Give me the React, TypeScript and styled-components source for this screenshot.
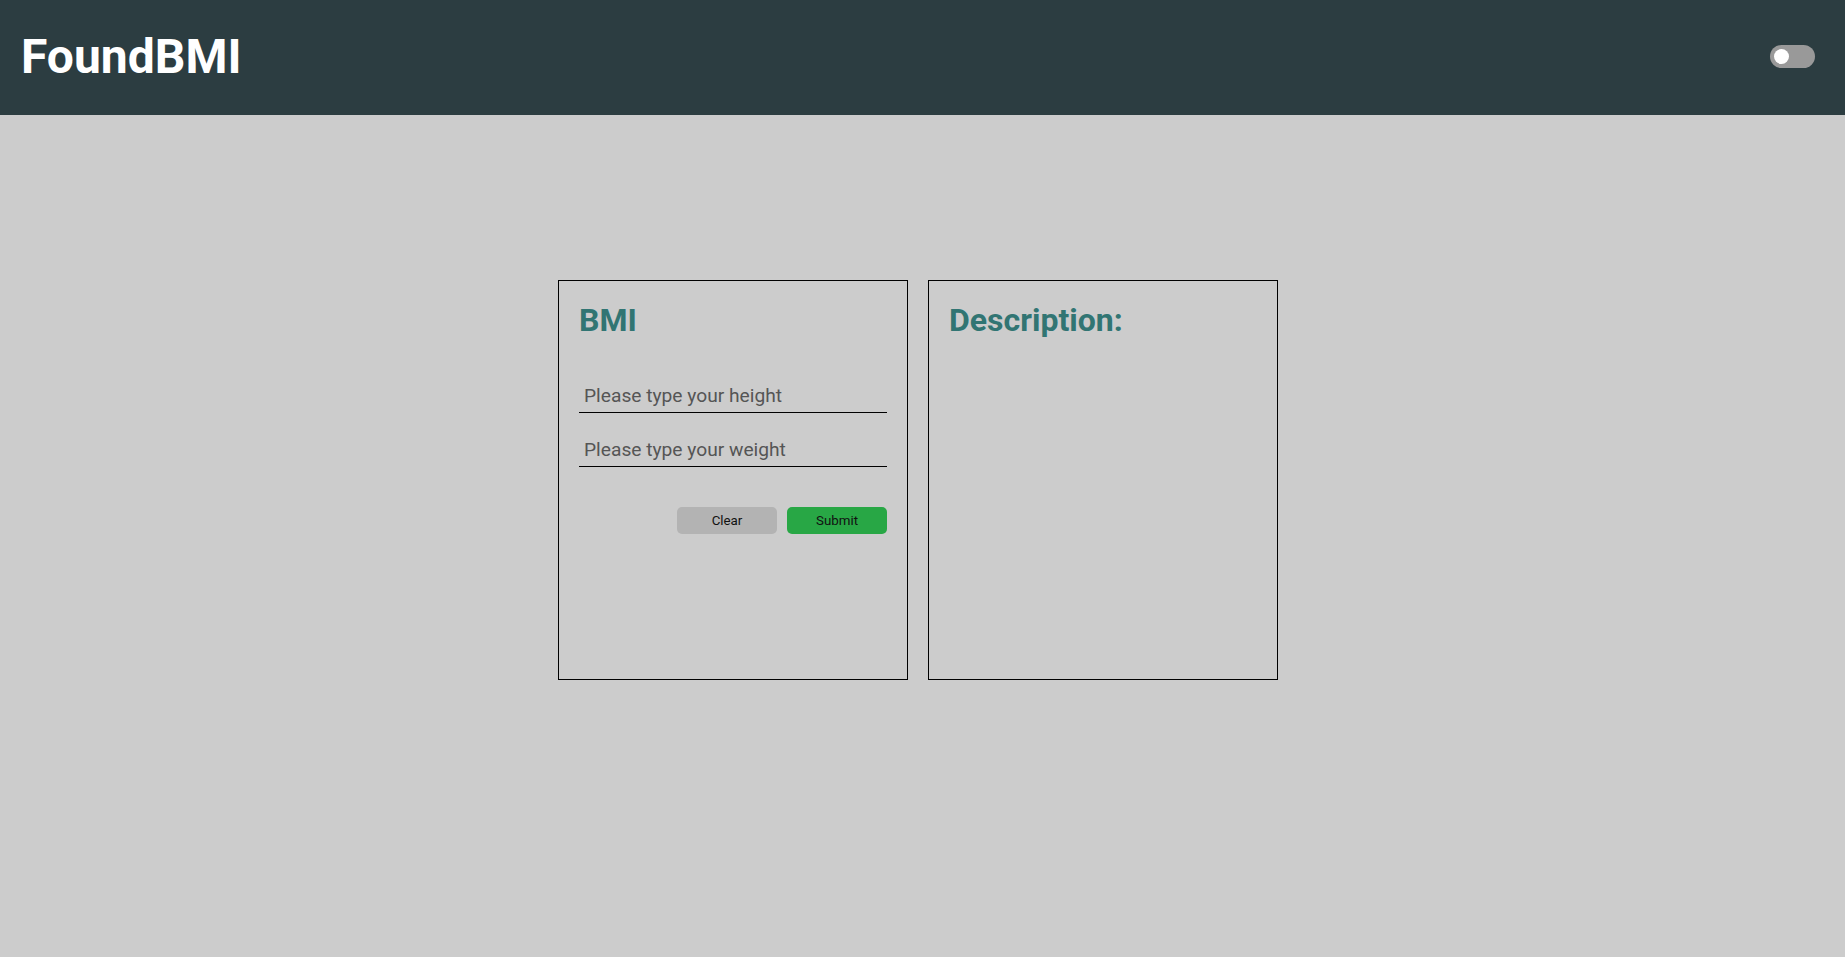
import React from "react";
import styled, { createGlobalStyle } from "styled-components";

const GlobalStyle = createGlobalStyle`
  html, body {
    margin: 0;
    padding: 0;
    background: #cccccc;
    font-family: Roboto, "Liberation Sans", Arial, sans-serif;
  }
  * { box-sizing: border-box; }
`;

const Page = styled.div`
  min-height: 957px;
  background: #cccccc;
  display: flex;
  flex-direction: column;
`;

const Header = styled.header`
  height: 115px;
  background: #2c3d41;
  display: flex;
  align-items: center;
  justify-content: space-between;
  padding: 0 30px 0 21px;
`;

const Brand = styled.h1`
  margin: 0 0 3px 0;
  font-family: Roboto, "Liberation Sans", sans-serif;
  font-weight: 700;
  font-size: 48px;
  color: #ffffff;
`;

const Toggle = styled.label`
  width: 45px;
  height: 23px;
  border-radius: 12px;
  background: #999999;
  position: relative;
  cursor: pointer;
  display: block;
  margin-bottom: 2px;
`;

const Knob = styled.span`
  position: absolute;
  top: 4px;
  left: 4px;
  width: 15px;
  height: 15px;
  border-radius: 50%;
  background: #ffffff;
`;

const Main = styled.main`
  display: flex;
  justify-content: center;
  gap: 20px;
  padding: 165px 9px 0 0;
`;

const Card = styled.section`
  width: 350px;
  height: 400px;
  border: 1px solid #000000;
  padding: 20px;
  display: flex;
  flex-direction: column;
`;

const CardTitle = styled.h2<{ $gap?: number }>`
  margin: 0 0 ${(p) => p.$gap ?? 0}px 0;
  font-family: Roboto, "Liberation Sans", sans-serif;
  font-weight: 700;
  font-size: 32px;
  line-height: normal;
  color: #317573;
`;

const Form = styled.form`
  display: flex;
  flex-direction: column;
  gap: 22px;
`;

const Field = styled.input`
  width: 100%;
  height: 32px;
  padding: 3px 5px 5px;
  border: none;
  border-bottom: 1px solid #000000;
  background: transparent;
  font-family: Roboto, "Liberation Sans", sans-serif;
  font-size: 19.2px;
  color: #222;
  outline: none;
  &::placeholder {
    color: #555555;
  }
`;

const Actions = styled.div`
  display: flex;
  justify-content: flex-end;
  gap: 10px;
  margin-top: 18px;
`;

const Button = styled.button<{ $variant: "clear" | "submit" }>`
  width: 100px;
  height: 27px;
  border: none;
  border-radius: 5px;
  font-family: Roboto, "Liberation Sans", sans-serif;
  font-size: 13.33px;
  color: #111111;
  background: ${(p) => (p.$variant === "submit" ? "#28a745" : "#b3b3b3")};
  cursor: pointer;
`;

export default function App() {
  return (
    <>
      <GlobalStyle />
      <Page>
        <Header>
          <Brand>FoundBMI</Brand>
          <Toggle aria-label="toggle theme">
            <Knob />
          </Toggle>
        </Header>
        <Main>
          <Card>
            <CardTitle $gap={42}>BMI</CardTitle>
            <Form onSubmit={(e) => e.preventDefault()}>
              <Field type="text" placeholder="Please type your height" />
              <Field type="text" placeholder="Please type your weight" />
              <Actions>
                <Button type="reset" $variant="clear">Clear</Button>
                <Button type="submit" $variant="submit">Submit</Button>
              </Actions>
            </Form>
          </Card>
          <Card>
            <CardTitle>Description:</CardTitle>
          </Card>
        </Main>
      </Page>
    </>
  );
}
